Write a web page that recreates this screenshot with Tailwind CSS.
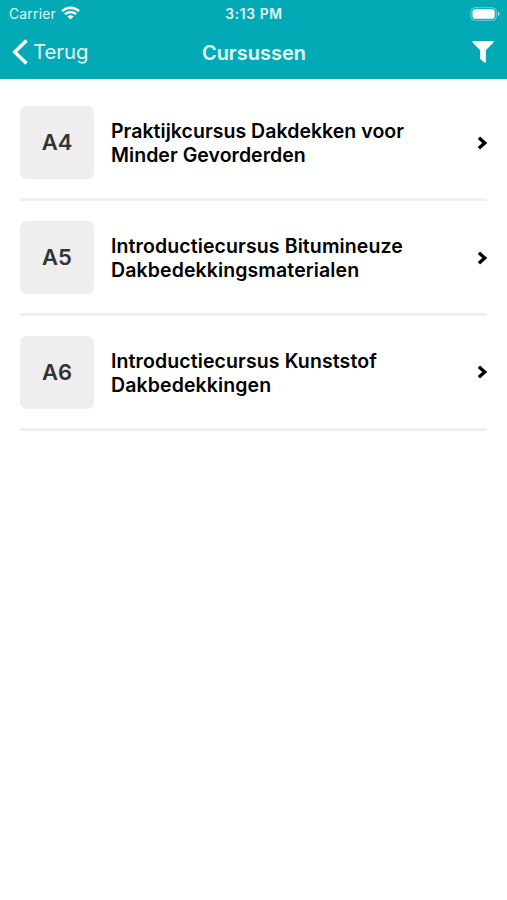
<!DOCTYPE html>
<html lang="nl">
<head>
<meta charset="utf-8">
<title>Cursussen</title>
<script src="https://cdn.jsdelivr.net/npm/@tailwindcss/browser@4"></script>
</head>
<body class="bg-white text-black font-['Inter','Liberation_Sans',sans-serif]">
<div class="w-[507px] h-[900px] overflow-hidden bg-white">
  <header class="h-[79px] bg-[#02aab6] text-white border-b border-[#16a5b1]">
    <div class="grid grid-cols-3 items-center h-[27px] pl-[9px] pr-[6px]">
      <div class="flex items-center gap-[5px]">
        <span class="text-[13.8px] leading-[28px] tracking-[0.25px] text-white/90">Carrier</span>
        <svg class="w-[19px] h-[14px] -mt-[2px]" viewBox="0 0 19 14" fill="none" stroke="white" stroke-width="2.5"><path d="M1 5.1C5.8 .5 13.2 .5 18 5.1M4 8.2C7.1 5.2 11.9 5.2 15 8.2"/><path d="M6.4 10.4C8.2 8.8 10.8 8.8 12.6 10.4L9.5 13.5Z" fill="white" stroke="none"/></svg>
      </div>
      <span class="text-center text-[13.8px] leading-[28px] font-semibold tracking-[0.65px] text-white/90 pr-[2px]">3:13 PM</span>
      <svg class="justify-self-end w-[31px] h-[14px] -mt-[1px]" viewBox="0 0 31 14"><rect x=".9" y=".7" width="25.4" height="12.6" rx="3.8" fill="none" stroke="white" stroke-opacity=".45"/><rect x="2.5" y="2.3" width="22.2" height="9.4" rx="2.3" fill="white"/><path d="M28 4.8C30 5.5 30 8.5 28 9.2Z" fill="white" fill-opacity=".6"/></svg>
    </div>
    <nav class="grid grid-cols-3 items-center h-[51px] pl-[12px] pr-[13px]">
      <div class="flex items-center gap-[5px] -mt-[2px]">
        <svg class="w-[16px] h-[26px]" viewBox="0 0 16 26" fill="none" stroke="white" stroke-width="3.5"><path d="M14.5 1.5L2.7 13L14.5 24.5"/></svg>
        <span class="text-[20.3px] leading-[26px] text-white/90">Terug</span>
      </div>
      <h1 class="text-center text-[20px] leading-[26px] font-semibold text-white/90 pl-[2px]">Cursussen</h1>
      <svg class="justify-self-end w-[22px] h-[22px] -mt-[1px]" viewBox="0 0 22 22" fill="white"><path d="M.8 0H21.2Q22 .8 21.2 1.7L13.8 9.2V21Q13.4 22 12.6 21.4L8.6 18.4Q8.2 18 8.2 17.5V9.2L.8 1.7Q0 .8 .8 0Z"/></svg>
    </nav>
  </header>
  <main class="px-[20px] pt-[7.6px]">
    <a class="flex items-center h-[114.8px] pt-[0.6px] border-b-3 border-[#efefef]">
      <span class="grid place-items-center w-[74px] h-[73.4px] shrink-0 rounded-[7px] bg-[#eee] text-[#333] text-[22px] font-semibold">A4</span>
      <span class="ml-[17px] flex-1 pt-[1.4px] text-[19.5px] leading-[24.5px] font-semibold tracking-[0.04px]">Praktijkcursus Dakdekken voor<br>Minder Gevorderden</span>
      <svg class="w-[10px] h-[14px]" viewBox="0 0 10 14" fill="none" stroke="black" stroke-width="3.3"><path d="M1.9 1.7L7.7 7L1.9 12.3"/></svg>
    </a>
    <a class="flex items-center h-[114.8px] pt-[0.6px] border-b-3 border-[#efefef]">
      <span class="grid place-items-center w-[74px] h-[73.4px] shrink-0 rounded-[7px] bg-[#eee] text-[#333] text-[22px] font-semibold">A5</span>
      <span class="ml-[17px] flex-1 pt-[1.4px] text-[19.5px] leading-[24.5px] font-semibold tracking-[0.11px]">Introductiecursus Bitumineuze<br>Dakbedekkingsmaterialen</span>
      <svg class="w-[10px] h-[14px]" viewBox="0 0 10 14" fill="none" stroke="black" stroke-width="3.3"><path d="M1.9 1.7L7.7 7L1.9 12.3"/></svg>
    </a>
    <a class="flex items-center h-[114.8px] pt-[0.6px] border-b-3 border-[#efefef]">
      <span class="grid place-items-center w-[74px] h-[73.4px] shrink-0 rounded-[7px] bg-[#eee] text-[#333] text-[22px] font-semibold">A6</span>
      <span class="ml-[17px] flex-1 pt-[1.4px] text-[19.5px] leading-[24.5px] font-semibold tracking-[0.11px]">Introductiecursus Kunststof<br>Dakbedekkingen</span>
      <svg class="w-[10px] h-[14px]" viewBox="0 0 10 14" fill="none" stroke="black" stroke-width="3.3"><path d="M1.9 1.7L7.7 7L1.9 12.3"/></svg>
    </a>
  </main>
</div>
</body>
</html>
